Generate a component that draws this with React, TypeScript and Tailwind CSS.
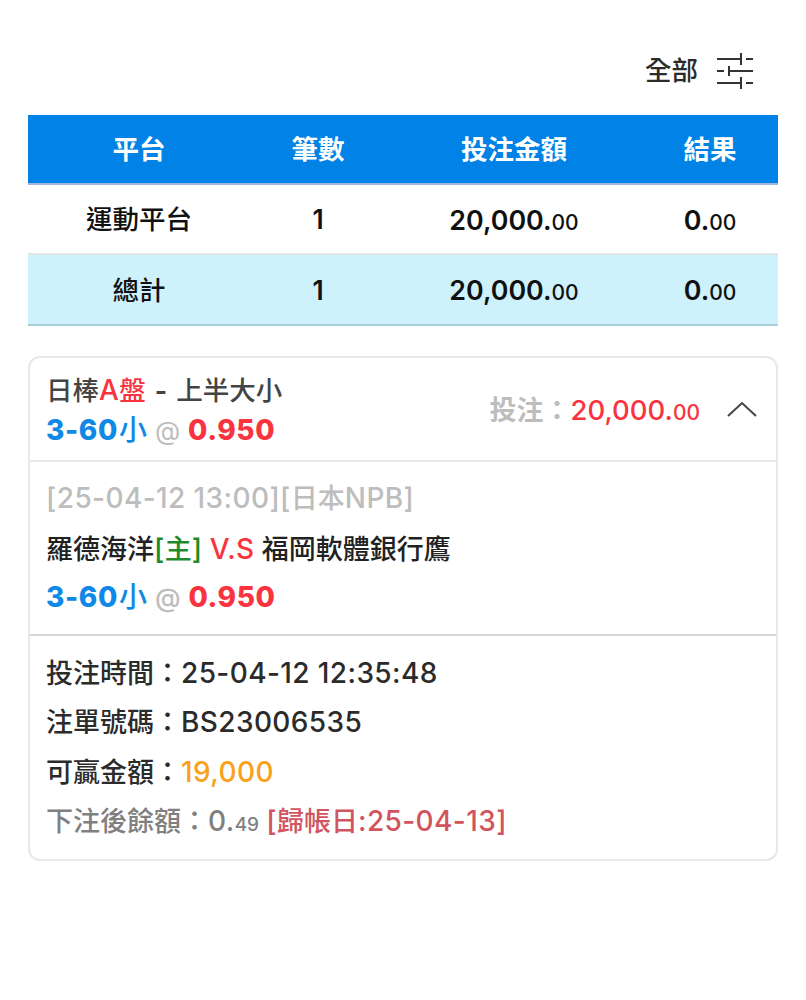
const font = "font-['Inter','Noto_Sans_CJK_TC',sans-serif]"

// latin runs sit a bit larger than the CJK around them
function L({ children }: { children: React.ReactNode }) {
  return <span className="text-[28px] tracking-[0.4px]">{children}</span>
}

function Amount({ whole, cents, size = 'text-[26.8px]' }: { whole: string; cents: string; size?: string }) {
  return <span className={size}>{whole}.<span className="text-[21px] font-medium">{cents}</span></span>
}

function Odds({ className = '' }: { className?: string }) {
  return (
    <div className={`text-[28px] leading-[38px] flex items-baseline ${className}`}>
      <span className="text-[#1088e6] font-extrabold tracking-[0.6px] mr-[1px]">3-60</span>
      <span className="text-[#1088e6] font-medium">小</span>
      <span className="text-[#bdbdbd] text-[26px] ml-[8px] mr-[8px]">@</span>
      <span className="text-[#f9343f] font-extrabold tracking-[0.6px]">0.950</span>
    </div>
  )
}

function Row({ cells, className }: { cells: React.ReactNode[]; className: string }) {
  return (
    <div className={`grid grid-cols-[222px_136px_256px_136px] items-center text-center pt-[2px] ${className}`}>
      {cells.map((c, i) => <div key={i}>{c}</div>)}
    </div>
  )
}

export default function App() {
  return (
    <div className={`${font} w-[806px] h-[1000px] bg-white px-[28px] text-[26.5px] text-[#2b2b2b]`}>
      <div className="flex items-center justify-end h-[115px] pt-[27px] pr-[25px] gap-[19px]">
        <span className="font-medium">全部</span>
        <svg width="36" height="36" viewBox="0 0 36 36" fill="none" stroke="#333" strokeWidth="2">
          <path d="M0 6h23M29 6h7M24 0v12M0 18h7M12 18h24M12 13v10M0 30h23M29 30h7M24 24v12" />
        </svg>
      </div>

      <Row
        className="h-[70px] bg-[#0082e6] border-b-2 border-[#9fb8dc] text-white font-bold"
        cells={['平台', '筆數', '投注金額', '結果']}
      />
      <Row
        className="h-[70px] border-b-2 border-[#e2e6e8] text-[#111] font-medium"
        cells={['運動平台', <span className="font-semibold">1</span>, <span className="font-semibold"><Amount whole="20,000" cents="00" /></span>, <span className="font-semibold"><Amount whole="0" cents="00" /></span>]}
      />
      <Row
        className="h-[71px] bg-[#cef2fc] border-b-2 border-[#a9cfd6] text-[#111] font-medium"
        cells={['總計', <span className="font-semibold">1</span>, <span className="font-semibold"><Amount whole="20,000" cents="00" /></span>, <span className="font-semibold"><Amount whole="0" cents="00" /></span>]}
      />

      <div className="mt-[30px] border-2 border-[#e8e8e8] rounded-[12px]">
        <div className="h-[104px] flex items-center justify-between pl-[16px] pr-[19px] border-b-2 border-[#e8e8e8]">
          <div>
            <div className="leading-[42px] font-medium text-[#444]">
              日棒<span className="text-[#f9343f]"><L>A</L>盤</span> <span className="font-bold mx-[2px]">-</span> 上半大小
            </div>
            <Odds />
          </div>
          <div className="flex items-center gap-[27px]">
            <div className="font-medium text-[27px] pt-[3px]">
              <span className="text-[#bdbdbd] font-bold">投注：</span>
              <span className="text-[#f9343f]"><Amount whole="20,000" cents="00" size="text-[27.5px]" /></span>
            </div>
            <svg width="30" height="16" viewBox="0 0 30 16" fill="none" stroke="#444" strokeWidth="2">
              <path d="M1 15 15 2l14 13" />
            </svg>
          </div>
        </div>

        <div className="h-[174px] flex flex-col pt-[17px] pl-[16px] border-b-2 border-[#d8d8d8] leading-[38px] font-medium text-[27px]">
          <div className="text-[#bdbdbd]"><L>[25-04-12 13:00]</L><L>[</L>日本<L>NPB]</L></div>
          <div className="text-[#222] mt-[12px]">
            羅德海洋<span className="text-[#1f8a2a]"><L>[</L>主<L>]</L></span> <span className="text-[#f9343f]"><L>V.S</L></span> 福岡軟體銀行鷹
          </div>
          <Odds className="mt-[9px]" />
        </div>

        <div className="flex flex-col pl-[16px] pt-[12.5px] pb-[9px] leading-[49.5px] font-medium text-[27px] text-[#2b2b2b]">
          <div>投注時間：<L>25-04-12 12:35:48</L></div>
          <div>注單號碼：<L>BS23006535</L></div>
          <div>可贏金額：<span className="text-[#f9a11b]"><L>19,000</L></span></div>
          <div className="text-[#808080]">
            下注後餘額：<L>0.</L><span className="text-[19px]">49</span> <span className="text-[#d2545e]"><L>[</L>歸帳日<L>:25-04-13]</L></span>
          </div>
        </div>
      </div>
    </div>
  )
}
